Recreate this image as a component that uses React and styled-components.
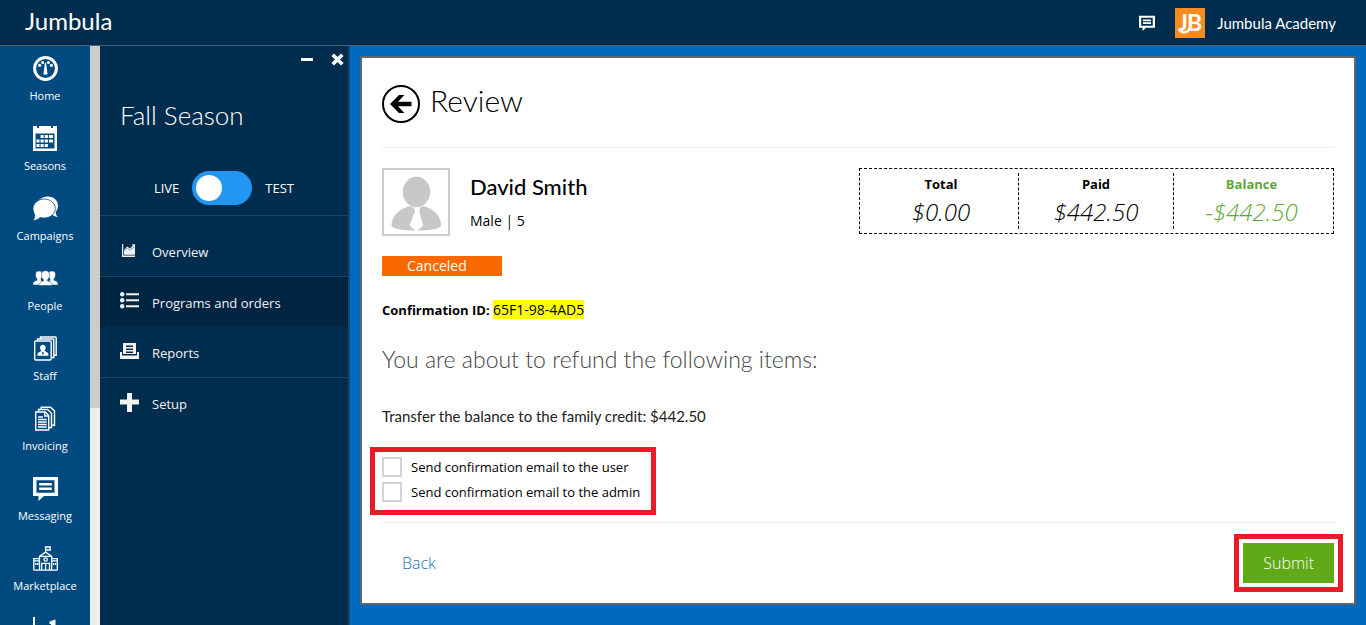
import React, {useState} from 'react';
import styled, {createGlobalStyle} from 'styled-components';


const segoe = '"Open Sans", "Noto Sans", sans-serif';
const raleway = 'Lato, "Open Sans", sans-serif';

const GlobalStyle = createGlobalStyle`
    * {
        box-sizing: border-box;
    }

    body {
        margin: 0;
        background: #006ac1;
        font-family: ${segoe};
        font-size: 13px;
        color: #000;
    }

    h1, h2, h3, p, ul, dl, dd {
        margin: 0;
        padding: 0;
    }

    a {
        text-decoration: none;
    }

    button {
        font-family: inherit;
        border: 0;
        padding: 0;
        background: none;
        cursor: pointer;
    }
`

const Page = styled.div`
    height: 100vh;
    display: flex;
    flex-direction: column;
    overflow: hidden;
`

const Header = styled.header`
    flex: none;
    display: flex;
    align-items: center;
    justify-content: space-between;
    height: 46px;
    padding: 0 30px 0 25px;
    background: #002d4e;
    border-bottom: 1px solid #466379;
    color: #fff;
    font-family: ${raleway};
`

const Brand = styled.a`
    color: #fff;
    font-size: 24px;
    line-height: 44px;
    padding-bottom: 3px;
`

const Account = styled.div`
    display: flex;
    align-items: center;
    font-size: 15px;

    & button {
        display: flex;
        margin-right: 20px;
    }

    & a {
        display: flex;
        align-items: center;
        gap: 12px;
        color: #fff;
    }
`

const Body = styled.div`
    flex: 1;
    min-height: 0;
    display: flex;
`

const Nav = styled.nav`
    flex: none;
    width: 90px;
    overflow: hidden;
    background: #004a80;
`

const NavItem = styled.a`
    display: flex;
    flex-direction: column;
    align-items: center;
    gap: 5px;
    padding: 10px 0;
    color: #fff;
    font-size: 11px;
    line-height: 20px;

    & svg {
        width: 25px;
        height: 25px;
    }
`

const ScrollTrack = styled.div`
    flex: none;
    width: 10px;
    background: #eee;
`

const ScrollThumb = styled.div`
    height: 62.5%;
    background: #ccc;
`

const Side = styled.aside`
    flex: none;
    width: 250px;
    background: #002d4e;
    border-right: 2px solid #17456b;
    color: #fff;
`

const WindowButtons = styled.div`
    display: flex;
    justify-content: flex-end;
    gap: 17px;
    padding: 7px 4px 0 0;

    & button {
        display: flex;
    }
`

const SeasonTitle = styled.h2`
    padding: 0 20px;
    margin-top: 29px;
    font-family: ${raleway};
    font-size: 26px;
    font-weight: 300;
    line-height: 40px;
`

const ModeRow = styled.div`
    display: flex;
    align-items: center;
    justify-content: center;
    gap: 13px;
    margin-top: 36px;
    padding-bottom: 10px;
    border-bottom: 1px solid #1b4463;
`

const Switch = styled.button`
    display: flex;
    justify-content: ${props => (props.$test ? 'flex-end' : 'flex-start')};
    width: 60px;
    height: 34px;
    padding: 4px;
    border-radius: 17px;
    background: #2196f3;

    &::before {
        content: "";
        width: 26px;
        height: 26px;
        border-radius: 50%;
        background: #fff;
    }
`

const Menu = styled.ul`
    list-style: none;
    padding-top: 10px;
`

const MenuItem = styled.li`
    background: ${props => (props.$active ? '#002543' : 'transparent')};
    border-bottom: ${props => (props.$line ? '1px solid #1b4463' : '0')};

    & a {
        display: flex;
        align-items: center;
        gap: 13px;
        height: 50px;
        padding: 2px 19px 0;
        color: #f2f2f2;
    }

    & svg {
        margin-bottom: 5px;
    }
`

const Main = styled.main`
    flex: 1;
    padding: 10px;
    min-width: 0;
    background: #006ac1;
`

const Card = styled.section`
    padding: 27px 20px 20px;
    background: #fff;
    border: 2px solid #5f666c;
`

const CardHeader = styled.div`
    display: flex;
    gap: 10px;
    padding-bottom: 24px;
    border-bottom: 1px solid #ececec;
`

const BackCircle = styled.button`
    display: flex;
    align-items: center;
    justify-content: center;
    width: 38px;
    height: 38px;
    border: 2px solid #000;
    border-radius: 50%;
`

const Title = styled.h1`
    font-family: ${raleway};
    font-size: 30px;
    font-weight: 300;
    line-height: 30px;
`

const Summary = styled.div`
    display: flex;
    align-items: flex-start;
    padding: 20px 0;
`

const Photo = styled.div`
    width: 68px;
    height: 68px;
    border: 2px solid #ccc;

    & svg {
        display: block;
    }
`

const Person = styled.div`
    flex: 1;
    padding: 4px 20px 0;

    & h2 {
        font-family: ${raleway};
        font-size: 22px;
        font-weight: 500;
        line-height: 30px;
    }

    & p {
        margin-top: 4px;
        font-size: 14px;
        line-height: 30px;
    }
`

const Totals = styled.dl`
    display: flex;
    padding: 4px;
    border: 1px dashed #000;
`

const Total = styled.div`
    width: 155px;
    height: 56px;
    text-align: center;
    color: ${props => (props.$green ? '#60a935' : '#000')};
    border-right: ${props => (props.$last ? '0' : '1px dashed #000')};

    & dt {
        font-size: 13px;
        font-weight: 700;
        line-height: 22px;
    }

    & dd {
        font-size: 24px;
        font-style: italic;
        font-weight: 300;
        line-height: 34px;
    }
`

const Status = styled.div`
    width: 120px;
    padding-left: 25px;
    background: #fa6800;
    color: #fff;
    font-size: 14px;
    line-height: 20px;
`

const Confirmation = styled.p`
    margin-top: 24px;
    line-height: 20px;

    & mark {
        background: #ff0;
        font-size: 14px;
    }
`

const Subtitle = styled.h3`
    margin-top: 24px;
    font-family: ${raleway};
    font-size: 23px;
    font-weight: 300;
    line-height: 30px;
    color: #444;
`

const Transfer = styled.p`
    margin-top: 32px;
    font-family: ${raleway};
    font-size: 15px;
    line-height: 20px;
    color: #222;
`

const EmailOptions = styled.div`
    display: flex;
    flex-direction: column;
    gap: 5px;
    width: fit-content;
    margin: 21px -12px 7px;
    padding: 5px 11px 8px 7px;
    border: 5px solid #e81c26;
`

const Option = styled.label`
    display: flex;
    align-items: center;
    gap: 9px;
    line-height: 20px;

    & input {
        appearance: none;
        width: 20px;
        height: 20px;
        margin: 0;
        border: 2px solid #d4d4d4;
        background: #fff;
    }

    & input:checked {
        background: #60a917;
    }
`

const Actions = styled.div`
    display: flex;
    align-items: center;
    justify-content: space-between;
    padding: 20px 0 0 20px;
    border-top: 1px solid #ececec;
    font-size: 16px;
    font-weight: 300;

    & a {
        color: #1a73c0;
    }
`

const Submit = styled.button`
    height: 40px;
    padding: 0 20px;
    background: #60a917;
    outline: 5px solid #e81c26;
    outline-offset: 4px;
    color: #fff;
    font-size: inherit;
    font-weight: inherit;
`

const HomeIcon = () => (
    <svg viewBox="0 0 25 25" fill="#fff">
        <circle cx="12.5" cy="12.5" r="10.9" fill="none" stroke="#fff" strokeWidth="3"/>
        <circle cx="6.6" cy="9.3" r="1.6"/>
        <circle cx="9.6" cy="6.4" r="1.5"/>
        <circle cx="15.4" cy="6.4" r="1.5"/>
        <circle cx="18.4" cy="9.3" r="1.6"/>
        <path d="M11.9 7h1.200l1.500 11.500h-4.200z"/>
    </svg>
)

const SeasonsIcon = () => (
    <svg viewBox="0 0 25 25" fill="#fff">
        <path fillRule="evenodd" d="M0 0h4v2h2V0h12v2h2V0h4v25H0zM2.500 7.500v15h19v-15z"/>
        <path d="M7.500 9h3.200v3H7.500zm4.200 0h3.200v3h-3.200zm4.200 0h4v3h-4zM3.500 13.500h3v3h-3zm4 0h3.200v3H7.500zm4.200 0h3.200v3h-3.200zm4.200 0h4v3h-4zM3.500 18h3v3h-3zm4 0h3.200v3H7.500zm4.200 0h3.200v3h-3.200z"/>
    </svg>
)

const CampaignsIcon = () => (
    <svg viewBox="0 0 25 25">
        <path fill="#fff" d="M15 0.500c5.800 0 10 4.100 10 9 0 3-1.400 5.300-2.200 6.400 0 2.200.6 3.800 2.100 5-2.200-.1-4.400-.9-5.700-2.100L5.500 4.500C8 1.800 11.500.5 15 .5z"/>
        <path fill="#fff" stroke="#004a80" strokeWidth=".8" d="M11.300 3c6 0 11 4.400 11 9.600 0 5.300-4.900 9.400-11 9.400-1.500 0-2.800-.2-4-.6C5.500 23.200 3 24.400-.2 24.500c1.400-1.600 2.100-3.600 2-5.600C.8 17.300 0 15 0 12.600 0 7.400 5.200 3 11.300 3z"/>
    </svg>
)

const PeopleIcon = () => (
    <svg viewBox="0 0 25 25" fill="#fff" stroke="#004a80" strokeWidth=".5">
        <path d="M2.500 8.500C2.500 6 3.700 5 6 5s3.500 1 3.500 3.500c0 2-.5 3.500-1.500 4.300v1.600c2 1 4 1.300 4 4.600H-.2c0-3.500 2-4 4.200-4.800v-1.500c-1-.9-1.500-2.200-1.500-4.200z"/>
        <path d="M22.500 8.500C22.500 6 21.300 5 19 5s-3.500 1-3.500 3.500c0 2 .5 3.500 1.500 4.300v1.600c-2 1-4 1.300-4 4.600h12.200c0-3.500-2-4-4.200-4.800v-1.500c1-.9 1.500-2.200 1.500-4.200z"/>
        <path d="M8.500 8.700c0-2.800 1.400-4 4-4s4 1.200 4 4c0 2.300-.8 3.800-1.900 4.700v1.500c2.800 1 4.600 1.700 4.600 4.600H5.800c0-2.900 1.900-3.600 4.600-4.600v-1.500c-1.100-.9-1.900-2.400-1.900-4.700z"/>
    </svg>
)

const StaffIcon = () => (
    <svg viewBox="0 0 25 25" fill="none" stroke="#fff" strokeWidth="1.400">
        <rect x="1.700" y="5" width="16.500" height="19" rx="1.200"/>
        <path d="M4.500 5V3h15.300q1 0 1 1v17.500h-2.500M7.500 3V1h14.700q1 0 1 1v17.300h-2.300"/>
        <path fill="#fff" stroke="none" d="M9.900 8.800c1.700 0 2.800 1.100 2.800 2.900 0 1.400-.6 2.500-1.300 3.100l3.300 2c.6.500.8 1.500.8 3H4.400c0-1.500.2-2.500.8-3l3.300-2c-.8-.6-1.400-1.700-1.400-3.100 0-1.800 1.100-2.900 2.800-2.900z"/>
        <path fill="#004a80" stroke="none" d="M9.900 15.700l1 1.300-1 2.300-1-2.300z"/>
    </svg>
)

const InvoicingIcon = () => (
    <svg viewBox="0 0 25 25" fill="none" stroke="#fff" strokeWidth="1.400">
        <path d="M2.700 6h9.500l3.500 3.500V24h-13z"/>
        <path d="M5.500 6V3.500h9l4 3.700v14.300h-2.800M8.200 3.500V1.200h9.300l4 3.700v14.300h-3"/>
        <path d="M11.700 6v4h4"/>
        <path d="M5 11h5M5 13.500h8.700M5 16h8.700M5 18.500h8.700M5 21h8.700"/>
    </svg>
)

const MessageIcon = ({size}) => (
    <svg viewBox="0 0 25 25" width={size} height={size} fill="#fff">
        <path fillRule="evenodd" d="M0 1h25v19H11l-5.500 5v-5H0zM3.500 4.200v12.600h18V4.200z"/>
        <path d="M6.200 7h12.600v2.600H6.200zm0 4.400h12.600V14H6.200z"/>
    </svg>
)

const MarketplaceIcon = () => (
    <svg viewBox="0 0 25 25" fill="none" stroke="#fff" strokeWidth="1.300">
        <path d="M.6 24.200h24M.8 24V12.700h5.700V24M18.700 24V12.700h5.600V24M6.500 24V10.300l6.100-4.200 6.100 4.200V24M12.600 6V1h4.600v3h-4.600M6.500 10.300h12.200M.8 14.800h5.700M18.700 14.800h5.600M8.700 24v-6.700h7.800V24M12.600 17.300V24M2.800 17v2M4.700 17v2M20.600 17v2M22.500 17v2"/>
        <circle cx="12.600" cy="13.500" r="1.700"/>
    </svg>
)

const ChartIcon = () => (
    <svg viewBox="0 0 25 25" fill="#fff">
        <path d="M0 1h2v22h23v2H0z"/>
        <path d="M16.500 5.500l6-2V21h-4.500V8h-1.500z"/>
        <path d="M11 12h4v9h-4z"/>
    </svg>
)

const OverviewIcon = () => (
    <svg width="20" height="20" viewBox="0 0 20 20" fill="#f2f2f2">
        <path d="M3 4h1.200v11.500H16V17H3z"/>
        <path d="M5 14.700v-3.500l3.300-3 2.500 2L16 6.500v8.200z"/>
        <path d="M5 10L8.300 6.600l2.500 2L14 5.500l-1.200-1.200H16v3.500l-1-1-4.200 3.300-2.500-2L5 11z"/>
    </svg>
)

const ProgramsIcon = () => (
    <svg width="20" height="20" viewBox="0 0 20 20" fill="#f2f2f2">
        <circle cx="3.200" cy="3.300" r="2.200"/>
        <circle cx="3.200" cy="9.300" r="2.200"/>
        <circle cx="3.200" cy="15.300" r="2.200"/>
        <path d="M7 2.300h13v2H7zm0 6h13v2H7zm0 6h13v2H7z"/>
    </svg>
)

const ReportsIcon = () => (
    <svg width="20" height="20" viewBox="0 0 20 20" fill="#f2f2f2">
        <path fillRule="evenodd" d="M4 2h13v11H4zM7 4.500V6h7V4.500zM7 7.500V9h7V7.500zM7 10.500V12h7v-1.500z"/>
        <path d="M1 11h2v3.500h15V11h2v7H1z"/>
    </svg>
)

const SetupIcon = () => (
    <svg width="20" height="20" viewBox="0 0 20 20" fill="#f2f2f2">
        <path d="M8 1h5v6.500h7v5h-7V20H8v-7.500H1v-5h7z"/>
    </svg>
)

const LogoIcon = () => (
    <svg width="30" height="30" viewBox="0 0 30 30">
        <rect width="30" height="30" fill="#f68b1f"/>
        <g fill="#fff" fontFamily="Lato, sans-serif" fontWeight="700" fontSize="23">
            <text x="12" y="23">B</text>
            <text x="3" y="23">J</text>
        </g>
        <path fill="none" stroke="#fff" strokeWidth="2.400" d="M4.500 22c3 4 9 2.500 10-2"/>
    </svg>
)

const PersonIcon = () => (
    <svg width="64" height="64" viewBox="0 0 64 64" fill="#c8c8c8">
        <ellipse cx="32.500" cy="22" rx="13.700" ry="15.200"/>
        <path d="M26 36c3.500 2.500 9.500 2.500 13 0 9 2 18 9 18 19 0 4-10 5.500-24.500 5.500S7.500 59 7.500 55c0-9 9-17 18.500-19z"/>
        <path fill="#fff" d="M29.500 37c2 1 5 1 7 0l-1.300 4.200 4 14.300-6.700 6-7-6 5.500-14.300z"/>
    </svg>
)

const navItems = [
    {name: 'Home', Icon: HomeIcon},
    {name: 'Seasons', Icon: SeasonsIcon},
    {name: 'Campaigns', Icon: CampaignsIcon},
    {name: 'People', Icon: PeopleIcon},
    {name: 'Staff', Icon: StaffIcon},
    {name: 'Invoicing', Icon: InvoicingIcon},
    {name: 'Messaging', Icon: MessageIcon},
    {name: 'Marketplace', Icon: MarketplaceIcon},
    {name: '', Icon: ChartIcon},
]

const menuItems = [
    {name: 'Overview', Icon: OverviewIcon, line: true},
    {name: 'Programs and orders', Icon: ProgramsIcon, active: true},
    {name: 'Reports', Icon: ReportsIcon, line: true},
    {name: 'Setup', Icon: SetupIcon},
]

const SeasonPanel = () => {
    const [test, setTest] = useState(false)

    return (
        <Side>
            <WindowButtons>
                <button type="button">
                    <svg width="13" height="13" viewBox="0 0 13 13"><path fill="#fff" d="M0 5h12v3H0z"/></svg>
                </button>
                <button type="button">
                    <svg width="13" height="13" viewBox="0 0 13 13">
                        <path stroke="#fff" strokeWidth="3.600" d="M1.700 1.700l9.600 9.600M11.300 1.700l-9.600 9.600"/>
                    </svg>
                </button>
            </WindowButtons>
            <SeasonTitle>Fall Season</SeasonTitle>
            <ModeRow>
                <span>LIVE</span>
                <Switch type="button" role="switch" aria-checked={test} $test={test} onClick={() => setTest(!test)}/>
                <span>TEST</span>
            </ModeRow>
            <Menu>
                {menuItems.map(({name, Icon, line, active}) => (
                    <MenuItem key={name} $line={line} $active={active}>
                        <a href="#"><Icon/>{name}</a>
                    </MenuItem>
                ))}
            </Menu>
        </Side>
    )
}

const ReviewCard = () => (
    <Card>
        <CardHeader>
            <BackCircle type="button">
                <svg width="22" height="20" viewBox="0 0 22 20">
                    <path d="M0 10L9 1h5.500L8 7.800h13.500v4.400H8l6.500 6.800H9z"/>
                </svg>
            </BackCircle>
            <Title>Review</Title>
        </CardHeader>
        <Summary>
            <Photo><PersonIcon/></Photo>
            <Person>
                <h2>David Smith</h2>
                <p>Male | 5</p>
            </Person>
            <Totals>
                <Total><dt>Total</dt><dd>$0.00</dd></Total>
                <Total><dt>Paid</dt><dd>$442.50</dd></Total>
                <Total $green $last><dt>Balance</dt><dd>-$442.50</dd></Total>
            </Totals>
        </Summary>
        <Status>Canceled</Status>
        <Confirmation><b>Confirmation ID:</b> <mark>65F1-98-4AD5</mark></Confirmation>
        <Subtitle>You are about to refund the following items:</Subtitle>
        <Transfer>Transfer the balance to the family credit: $442.50</Transfer>
        <EmailOptions>
            <Option><input type="checkbox"/>Send confirmation email to the user</Option>
            <Option><input type="checkbox"/>Send confirmation email to the admin</Option>
        </EmailOptions>
        <Actions>
            <a href="#">Back</a>
            <Submit type="submit">Submit</Submit>
        </Actions>
    </Card>
)

export const App = () => (
    <Page>
        <GlobalStyle/>
        <Header>
            <Brand href="#">Jumbula</Brand>
            <Account>
                <button type="button"><MessageIcon size={16}/></button>
                <a href="#"><LogoIcon/>Jumbula Academy</a>
            </Account>
        </Header>
        <Body>
            <Nav>
                {navItems.map(({name, Icon}, key) => (
                    <NavItem key={key} href="#"><Icon/>{name}</NavItem>
                ))}
            </Nav>
            <ScrollTrack><ScrollThumb/></ScrollTrack>
            <SeasonPanel/>
            <Main><ReviewCard/></Main>
        </Body>
    </Page>
)


export default App;
